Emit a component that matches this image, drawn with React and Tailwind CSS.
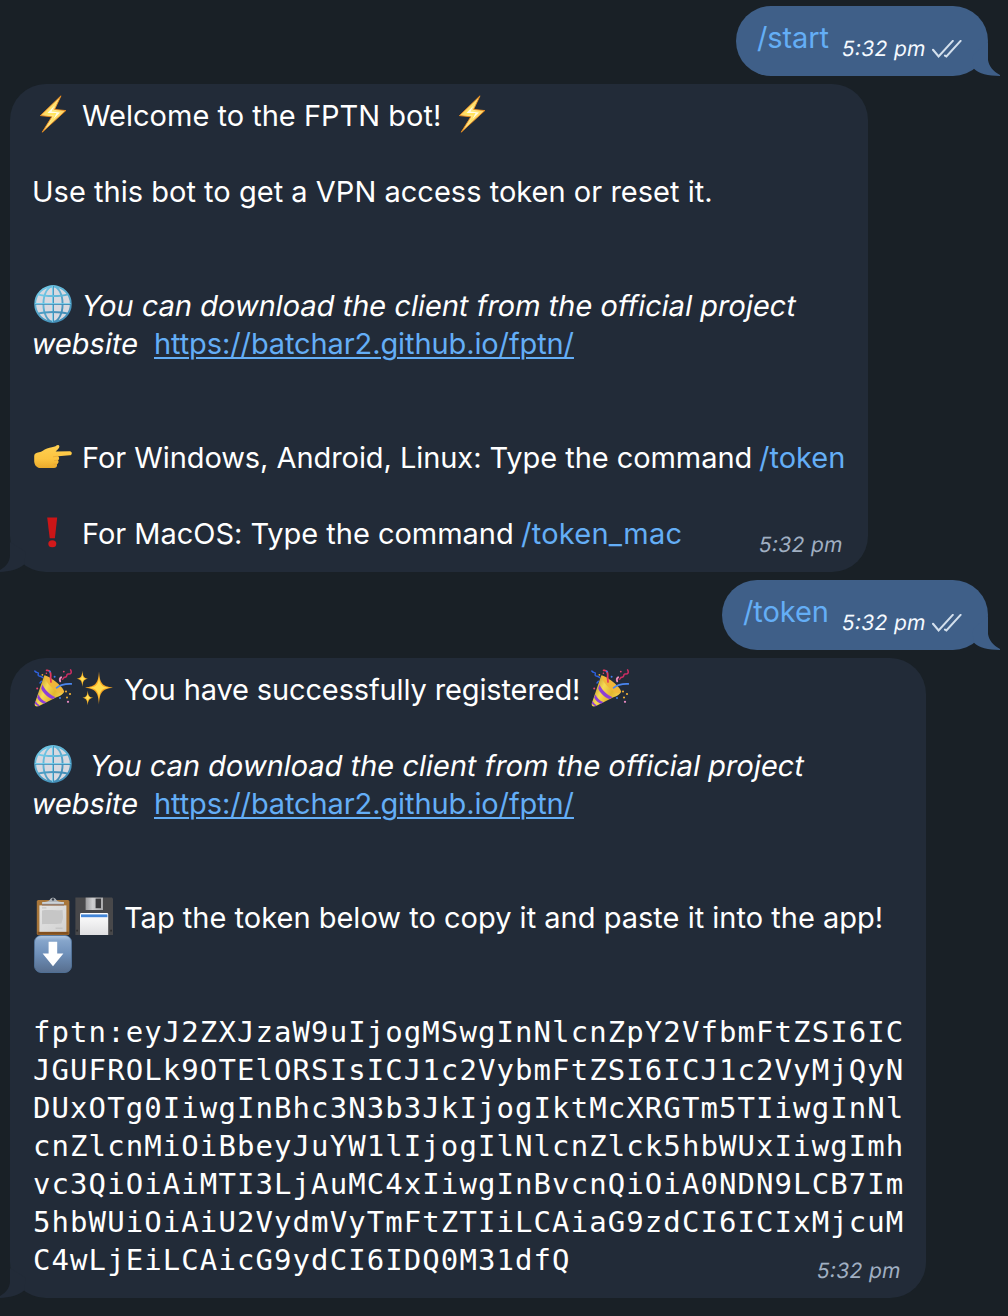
const iconBox = "block w-[38px] h-[38px] ml-px mr-[2px] -mt-1 shrink-0";

function Bolt() {
  return (
    <svg viewBox="0 0 38 38" className={iconBox}>
      <defs>
        <linearGradient id="boltFill" x1="0" y1="0" x2="1" y2="1">
          <stop offset="0" stopColor="#fbb52f" />
          <stop offset="0.5" stopColor="#ffe98a" />
          <stop offset="1" stopColor="#f9a825" />
        </linearGradient>
      </defs>
      <path d="M27 .8 6.4 20.6l11.4 1.2L8.2 37.2l23.6-21.6-11.2-1.2Z" fill="url(#boltFill)" stroke="#ee8d1c" strokeWidth="0.9" strokeLinejoin="round" />
      <path d="M22.5 7 10.5 19l10 1.2-4.5 8.2L27.5 17l-10-.8Z" fill="#ffe45e" />
      <path d="M20.5 10.5 13.5 18h9l-3 6 6.5-6.4-8.4-1Z" fill="#fffbe6" />
    </svg>
  );
}

function Globe() {
  return (
    <svg viewBox="0 0 38 38" className={iconBox}>
      <defs>
        <linearGradient id="globeLine" x1="0" y1="0" x2="0.6" y2="1">
          <stop offset="0" stopColor="#74cdea" />
          <stop offset="1" stopColor="#438fb8" />
        </linearGradient>
      </defs>
      <circle cx="19" cy="19" r="18" fill="#d8d9e0" />
      <g fill="none" stroke="url(#globeLine)" strokeWidth="1.9">
        <circle cx="19" cy="19" r="17.8" />
        <ellipse cx="19" cy="19" rx="9.6" ry="17.8" />
        <path d="M18.9 1 19.1 37" />
        <path d="M1 18.9 37 19.1" />
        <path d="M4.2 9.3C11 11.6 27 11.6 33.8 9.3M4.2 28.7C11 26.4 27 26.4 33.8 28.7" />
      </g>
    </svg>
  );
}

function Hand() {
  return (
    <svg viewBox="0 0 38 38" className={iconBox}>
      <defs>
        <linearGradient id="handFill" x1="0" y1="0" x2="0" y2="1">
          <stop offset="0" stopColor="#ffd052" />
          <stop offset="0.6" stopColor="#fcc440" />
          <stop offset="1" stopColor="#e9a92b" />
        </linearGradient>
      </defs>
      <path d="M.2 19C.2 16.8 2 15.8 5 15.3 8 14.7 9.6 12.6 13 11.4 16.5 10.3 19.5 10.2 21.5 9.2 23 8 24.8 7.4 25.3 8.9 25.8 10.8 23.6 12.8 21.6 14.4L35.8 14.2C38.6 14.4 38.4 18.1 35.6 18.3L24.2 19.2C25.6 20.4 25.3 22.4 24 23.2 25 24.6 24.6 26.4 23 27.2 23.4 29.4 22.2 31 20 31.1L7 31.1C3 31.1.6 28.6.2 24.5Z" fill="url(#handFill)" />
      <path d="M24 19.2 19 19.8M23.8 23.3 20 23.6M22.9 27.2 19.5 27.2" stroke="#e2a032" strokeWidth="0.6" fill="none" />
    </svg>
  );
}

function Exclamation() {
  return (
    <svg viewBox="0 0 38 38" className={iconBox}>
      <path d="M13.2 4.4h10l-2.3 20.8h-5.2Z" fill="#cb1517" />
      <ellipse cx="18.3" cy="30.8" rx="4" ry="3.5" fill="#d2191b" />
    </svg>
  );
}

function Party({ id }) {
  return (
    <svg viewBox="0 0 38 38" className={iconBox}>
      <defs>
        <linearGradient id={id} x1="0" y1="0.3" x2="1" y2="0.8">
          <stop offset="0" stopColor="#b98a24" />
          <stop offset="0.35" stopColor="#f6da55" />
          <stop offset="0.65" stopColor="#e2b62f" />
          <stop offset="1" stopColor="#f7dc58" />
        </linearGradient>
      </defs>
      <path d="M10.2 6.6 29.6 23.4C29 25.6 24 27.6 20 29.4L5 37C2 38.2.2 37 .8 34.2Z" fill={`url(#${id})`} />
      <path d="M10.2 6.6C14 6 29 17 30.2 22.6 30 24.4 27 25 24.6 23.4 18 20 10.6 12 10.2 6.6Z" fill="#f0b73a" />
      <path d="M8.6 15.6C10 20 16 26.4 21.6 28.2L18.2 30C13.4 28 8.4 23.6 7.2 19.2ZM4.4 25.6C6 29 9 32 12.6 33.2L9.6 34.8C6.6 33.6 4.4 31.4 3.2 28.6ZM1.6 32C2.4 33.8 4 35.4 6 36.4L4.4 37.2C2.6 36.4 1.4 35.2.8 34Z" fill="#8d3fd6" />
      <g fill="none" strokeLinecap="round">
        <path d="M12.6 1.4C16.6.6 17 5 16.6 8.2L17 13" stroke="#e5375e" strokeWidth="1.8" />
        <path d="M.8 2C2.6 4.6 5 2.6 4.2 5.2 3.4 8 7.6 6.6 8.6 8.6M7.4 12.2 6 14" stroke="#2f62e0" strokeWidth="1.4" />
        <path d="M36.6.8C38 3.6 37 5.2 34.4 5 31.6 4.6 34.2 8.4 31 8.2 29 8 29.8 10 28.4 10.2" stroke="#cf2d63" strokeWidth="1.5" />
        <path d="M26.2 12.4C25.4 10.6 26 9 27.2 8.2" stroke="#f08fbd" strokeWidth="1.8" />
        <path d="M22.6 18.8C26.6 15.6 32 14.6 37.4 14.9" stroke="#4a86ee" strokeWidth="1.7" />
      </g>
      <g fill="#3f7bea"><circle cx="15.8" cy="2.6" r="1" /><circle cx="20.6" cy="7.8" r="1" /><circle cx="26" cy="29" r="1" /></g>
      <g fill="#e8466f"><circle cx="3.2" cy="19.6" r="1" /><circle cx="29.8" cy="2.6" r="0.9" /><circle cx="12.4" cy="4.2" r="0.8" /></g>
      <g fill="#f3b234"><circle cx="36" cy="25" r="1.1" /><circle cx="33" cy="28.6" r="1" /><circle cx="32" cy="22.6" r="1" /><circle cx="8.4" cy="5.8" r="0.9" /></g>
      <circle cx="34" cy="32.8" r="1.1" fill="#ef8cc6" />
    </svg>
  );
}

function Sparkles() {
  return (
    <svg viewBox="0 0 38 38" className={iconBox}>
      <path d="M24 2.6C24.9 14 26.6 17.4 38 18.7 26.6 20 24.9 23.6 24 35.4 23.1 23.6 21.4 20 10 18.7 21.4 17.4 23.1 14 24 2.6Z" fill="#f6a623" />
      <path d="M24 8C24.7 15.6 26.7 17.8 33.7 18.7 26.7 19.6 24.7 22 24 29.8 23.3 22 21.3 19.6 14.3 18.7 21.3 17.8 23.3 15.6 24 8Z" fill="#ffdc4e" />
      <path d="M7.4 1.8C7.9 7.6 9 9.2 13 9.8 9 10.4 7.9 12 7.4 17.8 6.9 12 5.8 10.4 1.6 9.8 5.8 9.2 6.9 7.6 7.4 1.8ZM12.7 21.4C13.2 27 14.4 28.2 18.2 28.7 14.4 29.4 13.2 30.8 12.7 36.2 12.2 30.8 11 29.4 7.4 28.7 11 28.2 12.2 27 12.7 21.4Z" fill="#fbb829" />
      <path d="M7.4 6.4 8.5 8.9 10.4 9.8 8.5 10.7 7.4 13.2 6.3 10.7 4.4 9.8 6.3 8.9ZM12.7 25.4 13.8 27.8 15.7 28.7 13.8 29.6 12.7 32 11.6 29.6 9.7 28.7 11.6 27.8Z" fill="#ffe05a" />
    </svg>
  );
}

function Clipboard() {
  return (
    <svg viewBox="0 0 38 38" className={iconBox}>
      <defs>
        <linearGradient id="sheet" x1="0" y1="0" x2="1" y2="1">
          <stop offset="0" stopColor="#e4e4e4" />
          <stop offset="1" stopColor="#d2d2d2" />
        </linearGradient>
      </defs>
      <rect x="2.8" y="3" width="32.6" height="35" rx="1.6" fill="#a8763a" />
      <rect x="3.6" y="34.8" width="31" height="2.8" fill="#83501f" />
      <path d="M5.4 8.4H32.4V34.8H5.4Z" fill="url(#sheet)" />
      <path d="M8 13.4C14 12.6 22 13.8 28.6 13L29 21 27.4 26.4C20 27.6 13 26.6 8 27.2Z" fill="#c6c6c6" />
      <path d="M8 10.9H12.4M21.6 31.2H28.6" stroke="#b9b9b9" strokeWidth="0.8" />
      <path d="M8 5.2C12 4.8 15 4.4 16 2.4 17 .2 21 .2 22 2.4 23 4.4 26 4.8 30 5.2V7.8H8Z" fill="#b1b6bc" />
      <path d="M8.4 5.8H29.8" stroke="#d5dade" strokeWidth="1.2" />
      <path d="M8 7.9H30" stroke="#7d5a49" strokeWidth="0.9" />
      <circle cx="19" cy="2.4" r="1.2" fill="#333b47" />
    </svg>
  );
}

function Floppy() {
  return (
    <svg viewBox="0 0 38 38" className={iconBox}>
      <defs>
        <linearGradient id="shutter" x1="0" y1="0" x2="1" y2="0">
          <stop offset="0" stopColor="#9b9b9d" />
          <stop offset="0.4" stopColor="#cfcfd1" />
          <stop offset="1" stopColor="#a9a9ab" />
        </linearGradient>
        <linearGradient id="label" x1="0" y1="0" x2="0" y2="1">
          <stop offset="0" stopColor="#ffffff" />
          <stop offset="1" stopColor="#dfdfe1" />
        </linearGradient>
      </defs>
      <path d="M.4.4H37L38 1.6V38H.4Z" fill="#48484a" />
      <rect x="10.6" y="0.6" width="17.4" height="12.4" fill="url(#shutter)" />
      <rect x="20.6" y="1.6" width="5.4" height="9.6" fill="#3b3b3e" />
      <path d="M5 38V17.4Q5 16 6.4 16H31.8Q33.2 16 33.2 17.4V38Z" fill="url(#label)" />
      <path d="M6 17.4H32.4V20.2H6Z" fill="#4386d8" />
      <path d="M1.4 32.8H2.8V34.6H1.4ZM35.4 32.8H36.8V34.6H35.4Z" fill="#252527" />
    </svg>
  );
}

function DownArrow() {
  return (
    <svg viewBox="0 0 38 38" className={iconBox}>
      <defs>
        <linearGradient id="keycap" x1="0" y1="0" x2="0" y2="1">
          <stop offset="0" stopColor="#b5cbe4" />
          <stop offset="0.14" stopColor="#86a5cb" />
          <stop offset="0.5" stopColor="#6f90b9" />
          <stop offset="1" stopColor="#576e8e" />
        </linearGradient>
      </defs>
      <rect x="0.5" y="0.5" width="37" height="37" rx="6.5" fill="url(#keycap)" stroke="#54779f" strokeWidth="0.8" />
      <path d="M14.6 6.8H23.2V18.6H29.4L19 31.2 8.6 18.6H14.6Z" fill="#fff" />
    </svg>
  );
}

function Ticks() {
  return (
    <svg viewBox="0 0 30 18" className="block w-[30px] h-[18px] ml-[6px]" fill="none" stroke="#d3dfec" strokeWidth="2.1" strokeLinecap="round">
      <path d="M1 9.8 6.6 16.4 20.8.9" />
      <path d="M13 15.6 14.4 16.4 28.6.9" />
    </svg>
  );
}

function Line({ children }) {
  return <div className="flex h-[38px] items-center">{children}</div>;
}

function Blank() {
  return <div className="h-[38px]" />;
}

function Slanted({ className, children }) {
  return <em className={`inline-block origin-center not-italic -skew-x-[10deg] ${className}`}>{children}</em>;
}

function Time() {
  return (
    <Slanted className="tracking-[0.32px]">
      5<span className="align-[1.5px] leading-none">:</span>32 pm
    </Slanted>
  );
}

function Command({ className = "", children }) {
  return <a className={`text-[#64aef6] ${className}`}>{children}</a>;
}

function SiteLine() {
  return (
    <Line>
      <Slanted className="-ml-px w-[122px]">website</Slanted>
      <a className="text-[#64aef6] tracking-[-0.106px] underline decoration-2 underline-offset-[3px]">https://batchar2.github.io/fptn/</a>
    </Line>
  );
}

function Incoming({ className, children }) {
  return (
    <section className={`relative ml-[10px] rounded-[36px] bg-[#222b38] pl-[23px] pt-[13px] pb-[19px] ${className}`}>
      {children}
      <svg viewBox="0 0 28 30" className="absolute -left-[12px] bottom-0 h-[30px] w-[28px]" fill="#222b38">
        <path d="M12 0V13C12 20 8 25 0 29.2V30C10 30 20 28 26 22.6L28 10Z" />
      </svg>
      <span className="absolute bottom-[13px] right-[25px] text-[21px] leading-[28px] text-[#a0afc2]">
        <Time />
      </span>
    </section>
  );
}

function Outgoing({ className, children }) {
  return (
    <section className={`relative ml-auto mr-[20px] flex h-[70px] rounded-[35px] bg-[#3f5f88] pl-[21px] pt-[13px] ${className}`}>
      <Command className="tracking-[-0.1px]">{children}</Command>
      <span className="absolute right-[26px] top-[29px] flex items-center text-[21px] leading-[28px] text-[#f4f9ff]">
        <Time />
        <Ticks />
      </span>
      <svg viewBox="0 0 28 34" className="absolute -right-[12px] bottom-0 h-[34px] w-[28px]" fill="#3f5f88">
        <path d="M16 0V18C17 24 21 29.5 28 33V34C16 34 7 32 2 26.8L0 14Z" />
      </svg>
    </section>
  );
}

const token = [
  "fptn:eyJ2ZXJzaW9uIjogMSwgInNlcnZpY2VfbmFtZSI6IC",
  "JGUFROLk9OTElORSIsICJ1c2VybmFtZSI6ICJ1c2VyMjQyN",
  "DUxOTg0IiwgInBhc3N3b3JkIjogIktMcXRGTm5TIiwgInNl",
  "cnZlcnMiOiBbeyJuYW1lIjogIlNlcnZlck5hbWUxIiwgImh",
  "vc3QiOiAiMTI3LjAuMC4xIiwgInBvcnQiOiA0NDN9LCB7Im",
  "5hbWUiOiAiU2VydmVyTmFtZTIiLCAiaG9zdCI6ICIxMjcuM",
  "C4wLjEiLCAicG9ydCI6IDQ0M31dfQ",
];

export default function App() {
  return (
    <main className="flex h-[1316px] w-[1008px] flex-col gap-2 overflow-hidden whitespace-pre bg-[#192026] pt-[6px] font-['Inter',sans-serif] text-[29px] leading-[38px] text-white">
      <Outgoing className="w-[252px]">/start</Outgoing>

      <Incoming className="w-[858px]">
        <Line><Bolt /><span className="ml-2 w-[370px]">Welcome to the FPTN bot!</span><Bolt /></Line>
        <Blank />
        <Line><span className="-ml-px tracking-[0.02px]">Use this bot to get a VPN access token or reset it.</span></Line>
        <Blank />
        <Blank />
        <Line><Globe /><Slanted className="ml-2">You can download the client from the official project</Slanted></Line>
        <SiteLine />
        <Blank />
        <Blank />
        <Line><Hand /><span className="ml-2 w-[677px] tracking-[-0.065px]">For Windows, Android, Linux: Type the command</span><Command>/token</Command></Line>
        <Blank />
        <Line><Exclamation /><span className="ml-2 w-[439px] tracking-[-0.03px]">For MacOS: Type the command</span><Command className="tracking-[0.25px]">/token_mac</Command></Line>
      </Incoming>

      <Outgoing className="w-[266px]">/token</Outgoing>

      <Incoming className="w-[916px]">
        <Line><Party id="coneLeft" /><Sparkles /><span className="ml-[9px] w-[466px] tracking-[-0.13px]">You have successfully registered!</span><Party id="coneRight" /></Line>
        <Blank />
        <Line><Globe /><Slanted className="ml-4">You can download the client from the official project</Slanted></Line>
        <SiteLine />
        <Blank />
        <Blank />
        <Line><Clipboard /><Floppy /><span className="ml-[9px] tracking-[0.01px]">Tap the token below to copy it and paste it into the app!</span></Line>
        <Line><DownArrow /></Line>
        <Blank />
        <div className="font-['DejaVu_Sans_Mono',monospace] tracking-[1.08px]">
          {token.map((row) => <div key={row}>{row}</div>)}
        </div>
      </Incoming>
    </main>
  );
}
